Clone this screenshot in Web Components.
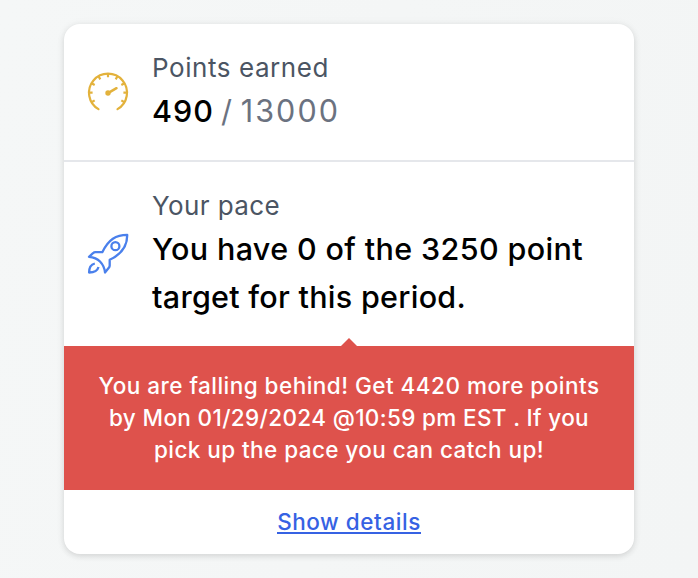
<!DOCTYPE html>
<html lang="en">
<head>
<meta charset="utf-8">
<title>Points</title>
<style>
  body {
    margin: 0;
    min-height: 578px;
    box-sizing: border-box;
    padding: 24px 64px;
    background: linear-gradient(100deg, #f5f7f7, #f3f5f5);
    font-family: Inter, "Liberation Sans", sans-serif;
    color: #000;
  }
</style>
</head>
<body>
<points-card>
  <stat-row label="Points earned">
    <gauge-icon slot="icon"></gauge-icon>
    <text-line width="62" weight="500">490</text-line>
    <text-line width="119" style="color: #6b7280; margin-left: 7px; word-spacing: -4px">/ 13000</text-line>
  </stat-row>
  <stat-row label="Your pace">
    <rocket-icon slot="icon"></rocket-icon>
    <text-line width="431" weight="500">You have 0 of the 3250 point</text-line>
    <text-line width="314" weight="500">target for this period.</text-line>
  </stat-row>
  <pace-alert>
    <text-line width="501">You are falling behind! Get 4420 more points</text-line>
    <text-line width="480">by Mon 01/29/2024 @10:59 pm EST . If you</text-line>
    <text-line width="390">pick up the pace you can catch up!</text-line>
  </pace-alert>
  <details-link slot="footer">Show details</details-link>
</points-card>

<script>
class PointsCard extends HTMLElement {
    constructor() {
        super();
        this.attachShadow({ mode: "open" });
    }

    connectedCallback() {
        this.shadowRoot.innerHTML = `
        <style>
          :host {
            display: block;
            height: 530px;
            border-radius: 16px;
            background: #fff;
            box-shadow: 0 2px 6px rgba(0, 0, 0, .13), 0 0 12px rgba(0, 0, 0, .03);
            overflow: hidden;
          }
          ::slotted(stat-row:first-of-type) {
            border-bottom: 2px solid #e5e7eb;
          }
        </style>
        <slot></slot>
        <slot name="footer"></slot>
      `;
    }
}

class StatRow extends HTMLElement {
    constructor() {
        super();
        this.attachShadow({ mode: "open" });
    }

    connectedCallback() {
        const width = this.getAttribute("label") === "Your pace" ? 128 : 177;

        this.shadowRoot.innerHTML = `
        <style>
          :host {
            display: flex;
            align-items: center;
            gap: 24px;
            padding: 24px;
          }
          .icon {
            display: flex;
            flex: none;
            width: 40px;
          }
          .label {
            height: 40px;
            line-height: 40px;
            font-size: 26px;
            color: #4b5563;
          }
          .value {
            display: flex;
            flex-wrap: wrap;
            margin: -1px 0 1px;
            font-size: 30.5px;
            line-height: 48px;
          }
        </style>
        <div class="icon"><slot name="icon"></slot></div>
        <div>
          <div class="label"><text-line width="${width}">${this.getAttribute("label")}</text-line></div>
          <div class="value"><slot></slot></div>
        </div>
      `;
    }
}

/* One line of text, tracked so that it fills the given width */
class TextLine extends HTMLElement {
    constructor() {
        super();
        this.attachShadow({ mode: "open" });
    }

    connectedCallback() {
        this.shadowRoot.innerHTML = `
        <style>
          :host {
            display: block;
            width: ${this.getAttribute("width")}px;
            font-weight: ${this.getAttribute("weight") || "inherit"};
            white-space: nowrap;
          }
          span {
            display: inline-block;
          }
        </style>
        <span><slot></slot></span>
      `;
        requestAnimationFrame(() => this.fit());
        this.fit();
    }

    fit() {
        const span = this.shadowRoot.querySelector("span");
        const count = this.textContent.trim().length;

        span.style.letterSpacing = "0";
        const natural = span.getBoundingClientRect().width;
        if (!natural || !count) return;
        span.style.letterSpacing = (this.getAttribute("width") - natural) / count + "px";
    }
}

class PaceAlert extends HTMLElement {
    constructor() {
        super();
        this.attachShadow({ mode: "open" });
    }

    connectedCallback() {
        this.shadowRoot.innerHTML = `
        <style>
          :host {
            position: relative;
            display: flex;
            flex-direction: column;
            align-items: center;
            padding: 24px;
            background: #de524c;
            color: #fff;
            font-size: 22.5px;
            font-weight: 500;
            line-height: 32px;
          }
          .arrow {
            position: absolute;
            top: -8px;
            left: 50%;
            margin-left: -9px;
            width: 18px;
            height: 9px;
            background: #de524c;
            clip-path: polygon(50% 0, 100% 100%, 0 100%);
          }
        </style>
        <div class="arrow"></div>
        <slot></slot>
      `;
    }
}

class DetailsLink extends HTMLElement {
    constructor() {
        super();
        this.attachShadow({ mode: "open" });
    }

    connectedCallback() {
        this.shadowRoot.innerHTML = `
        <style>
          :host {
            display: flex;
            justify-content: center;
            align-items: center;
            height: 64px;
            font-size: 22.5px;
            font-weight: 500;
          }
          a {
            color: #3662e3;
            line-height: 26px;
            letter-spacing: .55px;
            text-decoration: none;
            border-bottom: 2px solid #3662e3;
            height: 23px;
            margin-bottom: 1px;
          }
        </style>
        <a href="#"><slot></slot></a>
      `;
    }
}

class GaugeIcon extends HTMLElement {
    constructor() {
        super();
        this.attachShadow({ mode: "open" });
    }

    connectedCallback() {
        let ticks = [-120, -90, -60, -30, 0, 30, 60, 90, 120]
            .map((deg) => `<path d="M20 1v3.6" transform="rotate(${deg} 20 20)"/>`)
            .join("");

        this.shadowRoot.innerHTML = `
        <style>
          :host { display: block; height: 40px; }
          svg { display: block; overflow: visible; }
        </style>
        <svg width="40" height="40" viewBox="0 -0.700 40 40" fill="none" stroke="#e3b23c" stroke-width="2.2">
          <path d="M10.500 36.400A19 19 0 1 1 29.500 36.400" stroke-linecap="round"/>
          ${ticks}
          <path d="M20 20.500L28.500 15.500" stroke-width="2.500" stroke-linecap="round"/>
          <circle cx="20" cy="20.300" r="2.700" fill="#e3b23c" stroke="none"/>
        </svg>
      `;
    }
}

class RocketIcon extends HTMLElement {
    constructor() {
        super();
        this.attachShadow({ mode: "open" });
    }

    connectedCallback() {
        this.shadowRoot.innerHTML = `
        <style>
          :host { display: block; height: 40px; }
          svg { display: block; overflow: visible; }
        </style>
        <svg width="40" height="40" viewBox="0 0 40 40" fill="none" stroke="#4a80ec" stroke-width="2.300" stroke-linejoin="round">
          <path d="M39.200 .8C28 .8 20.500 5.500 14.300 18.200H7.500Q6 18.200 5 19.200L1 22.800C5.500 23.200 9 24.300 12 27.500C15 30.600 16.600 34 17 38.500L20.800 33.800Q21.700 32.800 21.700 31.500V25.800C34 20 39.500 12 39.200 .8Z"/>
          <circle cx="27.400" cy="12.200" r="4"/>
          <path d="M6.800 29.500C2.500 30.500 1.100 33 1.100 38.500C6.500 38.500 9.500 37 10.500 33"/>
        </svg>
      `;
    }
}

customElements.define("text-line", TextLine);
customElements.define("points-card", PointsCard);
customElements.define("stat-row", StatRow);
customElements.define("pace-alert", PaceAlert);
customElements.define("details-link", DetailsLink);
customElements.define("gauge-icon", GaugeIcon);
customElements.define("rocket-icon", RocketIcon);
</script>
</body>
</html>
